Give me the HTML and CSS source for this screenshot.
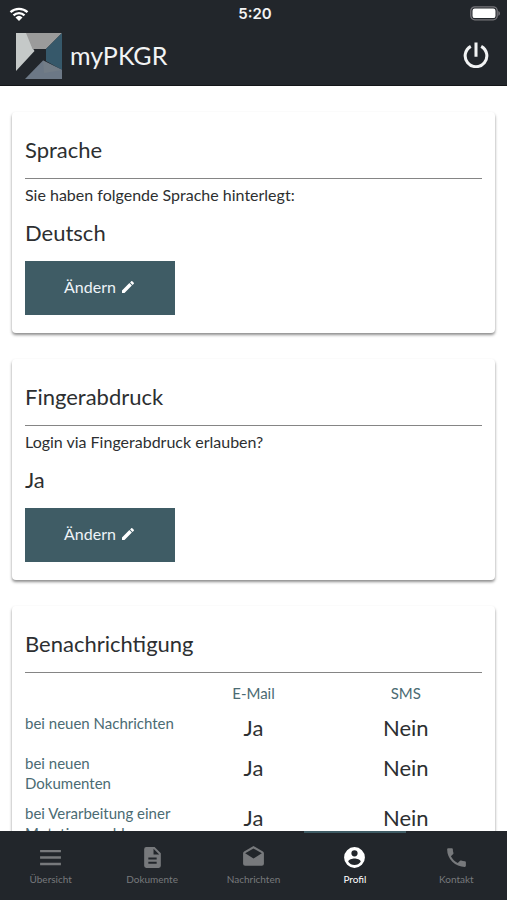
FILE: index.html
```html
<!DOCTYPE html>
<html lang="de">
<head>
<meta charset="utf-8">
<meta name="viewport" content="width=device-width, initial-scale=1">
<title>myPKGR</title>
<link rel="stylesheet" href="styles.css">
</head>
<body>
<header class="header">
  <div class="status">
    <svg class="wifi" viewBox="0 0 20 14" aria-hidden="true"><path d="M1.500 5.200a12.300 12.300 0 0 1 17 0M4.500 8.300a8 8 0 0 1 11 0" fill="none" stroke="currentColor" stroke-width="2.300"/><path d="M6.500 10.400a5.200 5.200 0 0 1 7 0L10 14z" fill="currentColor"/></svg>
    <span class="clock">5:20</span>
    <svg class="battery" viewBox="0 0 31 15" aria-hidden="true"><rect x=".8" y=".8" width="26.400" height="13" rx="4" fill="none" stroke="#77767b" stroke-width="1.300"/><rect x="2.500" y="2.500" width="23" height="9.600" rx="2.200" fill="#fff"/><path d="M28.300 5c2.200.8 2.200 4 0 4.800z" fill="#77767b"/></svg>
  </div>
  <div class="bar">
    <svg class="logo" viewBox="0 0 46 46" aria-hidden="true"><path d="M0 0h11l6 15.500 1.500 2.500L0 38z" fill="#c5c9c8"/><path d="M10 0h36L30 16H16.500z" fill="#9b9b9b"/><path d="M46 0v37l-16-9V16z" fill="#36586a"/><path d="M27 27.500 46 37v9H9z" fill="#6c7886"/><path d="M27 27.500 46 37 28 40z" fill="#737d87"/></svg>
    <h1 class="brand">myPKGR</h1>
    <button class="power" type="button" aria-label="Abmelden"><svg viewBox="0 0 24 24" aria-hidden="true"><path d="M12 .5v13M7.200 4a10 10 0 1 0 9.600 0" fill="none" stroke="currentColor" stroke-width="2.800"/></svg></button>
  </div>
</header>
<main class="content">
  <section class="card">
    <h2 class="title">Sprache</h2>
    <p class="text">Sie haben folgende Sprache hinterlegt:</p>
    <p class="value">Deutsch</p>
    <button class="change" type="button">Ändern <svg viewBox="0 0 24 24" aria-hidden="true"><path d="M20.710 7.040c.39-.39.39-1.040 0-1.410l-2.340-2.340c-.37-.39-1.020-.39-1.410 0l-1.840 1.830 3.750 3.750M3 17.250V21h3.750L17.810 9.930l-3.750-3.750z"/></svg></button>
  </section>
  <section class="card">
    <h2 class="title">Fingerabdruck</h2>
    <p class="text">Login via Fingerabdruck erlauben?</p>
    <p class="value">Ja</p>
    <button class="change" type="button">Ändern <svg viewBox="0 0 24 24" aria-hidden="true"><path d="M20.710 7.040c.39-.39.39-1.040 0-1.410l-2.340-2.340c-.37-.39-1.020-.39-1.410 0l-1.840 1.830 3.750 3.750M3 17.250V21h3.750L17.810 9.930l-3.750-3.750z"/></svg></button>
  </section>
  <section class="card">
    <h2 class="title">Benachrichtigung</h2>
    <table class="options">
      <thead><tr><td></td><th scope="col">E-Mail</th><th scope="col">SMS</th></tr></thead>
      <tbody>
        <tr><th scope="row">bei neuen Nachrichten</th><td>Ja</td><td>Nein</td></tr>
        <tr><th scope="row">bei neuen<br>Dokumenten</th><td>Ja</td><td>Nein</td></tr>
        <tr><th scope="row">bei Verarbeitung einer Mutationsmeldung</th><td>Ja</td><td>Nein</td></tr>
      </tbody>
    </table>
  </section>
</main>
<nav class="tabs">
  <a class="tab" href="#uebersicht"><svg viewBox="0 0 24 24" aria-hidden="true"><path d="M2 4.700h20v2.300H2zm0 6.200h20v2.300H2zm0 6.200h20v2.300H2z"/></svg>Übersicht</a>
  <a class="tab" href="#dokumente"><svg viewBox="0 0 24 24" aria-hidden="true"><path fill-rule="evenodd" d="M6 2h8l6 6v12a2 2 0 0 1-2 2H6a2 2 0 0 1-2-2V4a2 2 0 0 1 2-2zm7 1.500V9h5.500zM8 12v2h8v-2zm0 4v2h8v-2z"/></svg>Dokumente</a>
  <a class="tab" href="#nachrichten"><svg viewBox="0 0 24 24" aria-hidden="true"><path d="M22 8v10a2 2 0 0 1-2 2H4a2 2 0 0 1-2-2V8c0-.73.39-1.360.97-1.710L12 1l9.030 5.290c.58.35.97.98.97 1.710M4 8l8 5 8-5-8-4.680z"/></svg>Nachrichten</a>
  <a class="tab active" href="#profil" aria-current="page"><svg viewBox="0 0 24 24" aria-hidden="true"><path fill-rule="evenodd" d="M12 2a10 10 0 1 0 0 20 10 10 0 0 0 0-20zm0 3a3 3 0 1 1 0 6 3 3 0 0 1 0-6zm0 14.200c-2.500 0-4.710-1.280-6-3.200.03-2 4-3.100 6-3.100s5.970 1.100 6 3.100c-1.290 1.920-3.500 3.200-6 3.200z"/></svg>Profil</a>
  <a class="tab" href="#kontakt"><svg viewBox="0 0 24 24" aria-hidden="true"><path d="M6.620 10.790c1.440 2.830 3.760 5.150 6.590 6.590l2.200-2.200c.28-.28.67-.36 1.020-.25 1.120.37 2.320.57 3.570.57a1 1 0 0 1 1 1V20a1 1 0 0 1-1 1A17 17 0 0 1 3 4a1 1 0 0 1 1-1h3.500a1 1 0 0 1 1 1c0 1.250.2 2.450.57 3.570.11.35.03.74-.25 1.020z"/></svg>Kontakt</a>
</nav>
</body>
</html>
```
FILE: styles.css
```css
* { box-sizing: border-box; }

body {
  margin: 0;
  height: 100vh;
  display: flex;
  flex-direction: column;
  background: #fff;
  color: #2d2f31;
  font-family: Lato, "Open Sans", sans-serif;
  font-size: 16px;
  line-height: 20px;
}

h1, h2, p { margin: 0; font-weight: 400; }

svg { display: block; fill: currentColor; }

.header {
  flex: none;
  background: #22262b;
  border-bottom: 1px solid #141619;
  color: #f2f3f4;
}

.status {
  display: grid;
  grid-template-columns: 1fr auto 1fr;
  align-items: center;
  height: 27px;
  padding: 0 6px 0 9px;
}

.wifi { width: 20px; height: 14px; color: #fff; }
.clock { font: 600 15px/20px Inter, sans-serif; }
.battery { width: 31px; height: 15px; justify-self: end; }

.bar {
  display: flex;
  align-items: center;
  gap: 8px;
  height: 58px;
  padding: 0 18px 0 16px;
}

.logo { width: 46px; height: 46px; }
.brand { flex: 1; padding-bottom: 2px; font-size: 25px; line-height: 32px; }

.power {
  padding: 0 0 2px;
  border: 0;
  background: none;
  color: inherit;
}

.power svg { width: 26px; height: 26px; }

.content {
  flex: 1;
  min-height: 0;
  display: flex;
  flex-direction: column;
  gap: 26px;
  padding: 26px 12px;
  overflow-y: auto;
  scrollbar-width: none;
}

.card {
  flex: none;
  padding: 23px 13px 18px;
  border-radius: 4px;
  background: #fff;
  box-shadow: 0 2px 3px rgba(0, 0, 0, .45);
}

.title {
  padding-bottom: 13px;
  margin-bottom: 6px;
  border-bottom: 1px solid #858585;
  font-size: 22px;
  line-height: 30px;
}

.value {
  margin: 12px 0;
  font-size: 22px;
  line-height: 32px;
}

.change {
  display: flex;
  align-items: center;
  justify-content: center;
  gap: 4px;
  width: 150px;
  height: 54px;
  padding: 0 0 2px;
  border: 0;
  background: #3f5c65;
  color: #eef3f8;
  font: inherit;
}

.change svg { width: 16px; height: 16px; color: #fff; }

.options {
  width: 100%;
  table-layout: fixed;
  border-collapse: collapse;
}

.options th {
  padding: 4px 0 6px;
  color: #4b6b73;
  font-size: 15px;
  font-weight: 400;
  vertical-align: top;
}

.options tbody th { text-align: left; }

.options td {
  padding: 4px 0 6px;
  font-size: 22px;
  line-height: 30px;
  text-align: center;
  vertical-align: top;
}

.options thead td { padding: 0; }

.tabs {
  flex: none;
  display: grid;
  grid-template-columns: repeat(5, 1fr);
  height: 69px;
  background: #22262b;
}

.tab {
  display: flex;
  flex-direction: column;
  align-items: center;
  gap: 2px;
  padding-top: 12px;
  border-top: 2px solid transparent;
  color: #77797c;
  font-size: 10px;
  line-height: 14px;
  text-decoration: none;
}

.tab svg { width: 25px; height: 25px; }
.active { border-color: #3f5c65; color: #fff; }
```
